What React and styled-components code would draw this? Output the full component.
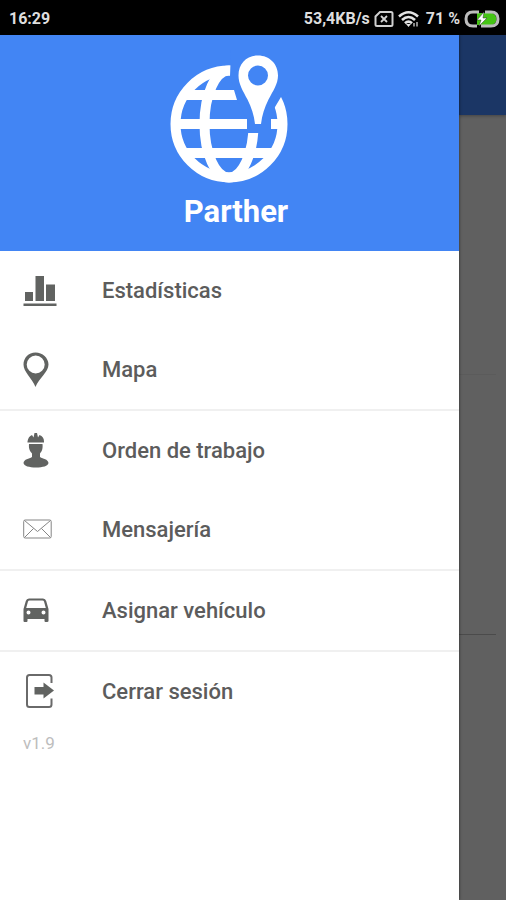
import React from 'react'
import styled, { createGlobalStyle } from 'styled-components';

function App() {
  return (
    <>
      <GlobalStyle />
      <Screen>
        <StatusBar>
          <span>16:29</span>
          <StatusInfo>
            <span>53,4KB/s</span>
            <SimIcon />
            <WifiIcon />
            <Battery>71 %</Battery>
            <BatteryIcon />
          </StatusInfo>
        </StatusBar>
        <Content>
          <Drawer>
            <DrawerHeader>
              <Logo />
              <Title>Parther</Title>
            </DrawerHeader>
            <nav>
              {groups.map((group, index) => (
                <MenuGroup key={index}>
                  {group.map(({ label, Icon }) => (
                    <MenuItem key={label}>
                      <MenuLink href="#">
                        <Icon />
                        {label}
                      </MenuLink>
                    </MenuItem>
                  ))}
                </MenuGroup>
              ))}
            </nav>
            <Version>v1.9</Version>
          </Drawer>
          <Page>
            <Toolbar />
            <Section $line="#5b5b5b" />
            <Section $line="#4b4b4b" />
          </Page>
        </Content>
      </Screen>
    </>
  )
}

function Logo() {
  return (
    <svg width="136" height="136" viewBox="168 50 136 136" aria-hidden="true">
      <g fill="none" stroke="#fff" strokeWidth="10">
        <circle cx="229" cy="124" r="53.5" />
        <ellipse cx="229" cy="124" rx="24.5" ry="53.5" />
        <path d="M186 95H272M176 124H283M186 153H272" />
      </g>
      <path fill="#4285f4" d="M231 50 230 76 234 90 237 100 247 119V133H271V118L275 107 281 97 292 90V50Z" />
      <path
        fill="#fff"
        fillRule="evenodd"
        d="M258 55.5C246.500 55.500 238.500 64 238.500 75.500C238.500 84 243 91 247.500 99.500C251.500 107.500 254 115 255 124H261C262 115 264.500 107.500 268.500 99.500C273 91 278 84 278 75.500C278 64 269.500 55.500 258 55.500ZM258 65.500A10 10 0 1 1 258 85.500A10 10 0 1 1 258 65.500Z"
      />
    </svg>
  )
}

function SimIcon() {
  return (
    <svg width="20" height="18" viewBox="0 0 20 18" fill="none" stroke="#d0d0d0" strokeWidth="2" aria-hidden="true">
      <path d="M6 2H17Q18.500 2 18.500 3.500V14.500Q18.500 16 17 16H3Q1.500 16 1.500 14.500V6.500Z" />
      <path d="M7 6 13 12M13 6 7 12" strokeWidth="1.800" />
    </svg>
  )
}

function WifiIcon() {
  return (
    <svg width="22" height="18" viewBox="0 0 22 18" fill="none" stroke="#e4e4e4" strokeWidth="2.600" aria-hidden="true">
      <path d="M1 6.500Q10.500 -2 20 6.500M4 10Q10.500 4 17 10M7 13.200Q10.500 10 14 13.200" />
      <path d="M8 14H13L10.500 17Z" fill="#e4e4e4" stroke="none" />
      <path d="M16 16.500V13M19 16.500V12" stroke="#999" strokeWidth="1.800" />
    </svg>
  )
}

function BatteryIcon() {
  return (
    <svg width="36" height="18" viewBox="0 0 36 18" aria-hidden="true">
      <path d="M13 3H28Q32.500 5 32.500 9T28 15H13Z" fill="#45c414" />
      <path d="M15 2H9Q2 2 2 9T9 16H13M21 2H27Q34 2 34 9T27 16H17" fill="none" stroke="#bdbdbd" strokeWidth="3" />
      <path d="M20 2 13 10H17L15 16 23 8H19Z" fill="#fff" stroke="#333" strokeWidth="0.500" />
    </svg>
  )
}

function StatsIcon() {
  return (
    <MenuIcon viewBox="0 0 36 36">
      <path d="M2 19H10V28H2ZM12.500 3H21V28H12.500ZM23 11.500H32V28H23ZM.5 30.500H33.500V33H.5Z" />
    </MenuIcon>
  )
}

function MapIcon() {
  return (
    <MenuIcon viewBox="0 0 36 36">
      <path
        fillRule="evenodd"
        d="M12.500 .5C5.500 .5 .5 6 .5 12.500C.5 20 9 26 12.500 35C16 26 25.500 20 25.500 12.500C25.500 6 19.500 .5 12.500 .5ZM12.700 3.500A9 9 0 1 1 12.700 21.500A9 9 0 1 1 12.700 3.500Z"
      />
    </MenuIcon>
  )
}

function WorkerIcon() {
  return (
    <MenuIcon viewBox="0 1 36 36">
      <path d="M4.500 10.500V9.500C5 6 6.500 4 9 3L10.500 5.500 11.500 1H14L15 5.500 16.500 3C19.500 4 21 6.500 21 9.500V10.500Z" />
      <path d="M6 12H19.500C20 17 19 19 17 21.500V25C20 27 25 27 25.500 31C25 34 20 35.500 13 35.500S1 34 .5 31C1 27 6 27 9 25V21.500C7 19 5.500 17 6 12Z" />
    </MenuIcon>
  )
}

function MailIcon() {
  return (
    <MenuIcon viewBox="0 1 36 36" fill="none" stroke="#858585">
      <rect x="0.700" y="9" width="27.500" height="18" rx="1.500" />
      <path d="M1.500 9.500 14.500 20.500 27.500 9.500M1.500 26.500 10.500 17.500M27.500 26.500 18.500 17.500" />
    </MenuIcon>
  )
}

function CarIcon() {
  return (
    <MenuIcon viewBox="0 1 36 36">
      <path
        fillRule="evenodd"
        d="M6 6.500H20Q22.500 6.500 23.200 9L25.500 17V29Q25.500 30 24 30H22.500Q21.500 30 21.500 29V27H4.500V29Q4.500 30 3.500 30H1.500Q.5 30 .5 29V17L2.800 9Q3.500 6.500 6 6.500ZM6.500 8.500Q5.300 8.500 5 9.500L3.200 16H22.800L21 9.500Q20.700 8.500 19.500 8.500ZM5.500 18.500A2 2 0 1 0 5.500 22.500A2 2 0 1 0 5.500 18.500ZM20.500 18.500A2 2 0 1 0 20.500 22.500A2 2 0 1 0 20.500 18.500Z"
      />
    </MenuIcon>
  )
}

function ExitIcon() {
  return (
    <MenuIcon viewBox="0 1 36 36">
      <path d="M28.500 10V4.500Q28.500 2 26 2H6.500Q4 2 4 4.500V31.500Q4 34 6.500 34H26Q28.500 34 28.500 31.500V25.500" fill="none" stroke="#6a6a6a" strokeWidth="2" />
      <path d="M11.500 14H20.500V9.500L31 17.500 20.500 25.500V21.500H11.500Z" />
    </MenuIcon>
  )
}

const groups = [
  [
    { label: 'Estadísticas', Icon: StatsIcon },
    { label: 'Mapa', Icon: MapIcon },
  ],
  [
    { label: 'Orden de trabajo', Icon: WorkerIcon },
    { label: 'Mensajería', Icon: MailIcon },
  ],
  [{ label: 'Asignar vehículo', Icon: CarIcon }],
  [{ label: 'Cerrar sesión', Icon: ExitIcon }],
];

export default App

const GlobalStyle = createGlobalStyle`
  * {
    box-sizing: border-box;
  }
  body {
    margin: 0;
    font-family: Roboto, sans-serif;
  }
`;

const Screen = styled.div`
  display: flex;
  flex-direction: column;
  min-height: 100vh;
`;

const StatusBar = styled.header`
  display: flex;
  justify-content: space-between;
  align-items: center;
  height: 35px;
  padding: 2px 6px 0 9px;
  background: #000;
  color: #dedede;
  font-size: 16px;
  font-weight: 700;
`;

const StatusInfo = styled.div`
  display: flex;
  align-items: center;
  gap: 4px;
`;

const Battery = styled.span`
  margin-left: 2px;
`;

const Content = styled.div`
  display: grid;
  grid-template-columns: minmax(0, 1fr) 47px;
  flex: 1;
`;

const Drawer = styled.aside`
  background: #fff;
  box-shadow: 0 0 3px rgba(0, 0, 0, 0.6);
  z-index: 1;
  clip-path: inset(0 -4px 0 0);
`;

const DrawerHeader = styled.div`
  display: flex;
  flex-direction: column;
  align-items: center;
  height: 216px;
  padding: 15px 0 0 13px;
  background: #4285f4;
`;

const Title = styled.h1`
  margin: 8px 0 0;
  color: #fff;
  font-size: 31px;
  font-weight: 700;
  line-height: 36px;
`;

const MenuGroup = styled.ul`
  margin: 0;
  padding: 0;
  list-style: none;

  & + & {
    border-top: 2px solid #f0f0f0;
  }
`;

const MenuItem = styled.li`
  display: block;
`;

const MenuLink = styled.a`
  display: flex;
  align-items: center;
  gap: 43px;
  height: 79px;
  padding: 0 23px;
  color: #5c5c5c;
  font-size: 22px;
  font-weight: 500;
  text-decoration: none;
`;

const MenuIcon = styled.svg.attrs({ 'aria-hidden': true })`
  flex: none;
  width: 36px;
  height: 36px;
  fill: ${({ fill }) => fill || '#616361'};
`;

const Version = styled.p`
  margin: 0;
  padding: 0 23px;
  color: #bdbdbd;
  font-size: 17px;
  line-height: 24px;
`;

const Page = styled.main`
  background: #606060;
`;

const Toolbar = styled.div`
  height: 80px;
  background: #1b3665;
  box-shadow: 0 1px 3px rgba(0, 0, 0, 0.3);
`;

const Section = styled.section`
  height: 260px;
  margin-right: 10px;
  border-bottom: 1px solid ${({ $line }) => $line};
`;
